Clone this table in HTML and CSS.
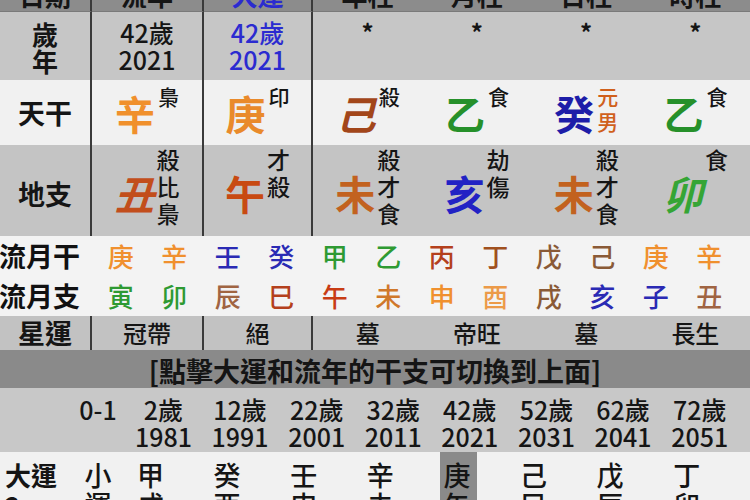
FILE: index.html
```html
<!DOCTYPE html>
<html lang="zh-Hant">
<head>
<meta charset="utf-8">
<title>八字</title>
<link rel="stylesheet" href="styles.css">
</head>
<body>
<div class="page">
  <div class="chart">
    <div class="hdr sep">日期</div>
    <div class="hdr sep">流年</div>
    <div class="hdr sep blue">大運</div>
    <div class="hdr">年柱</div>
    <div class="hdr">月柱</div>
    <div class="hdr">日柱</div>
    <div class="hdr">時柱</div>

    <div class="age lbl sep">歲<br>年</div>
    <div class="age sep">42歲<br>2021</div>
    <div class="age sep blue">42歲<br>2021</div>
    <div class="age star">*</div>
    <div class="age star">*</div>
    <div class="age star">*</div>
    <div class="age star">*</div>

    <div class="gan rlbl sep">天干</div>
    <div class="gan cell sep"><span class="big c-or">辛</span><span class="note">梟</span></div>
    <div class="gan cell sep"><span class="big c-or2">庚</span><span class="note">印</span></div>
    <div class="gan cell"><span class="big c-br it">己</span><span class="note">殺</span></div>
    <div class="gan cell"><span class="big c-gr">乙</span><span class="note">食</span></div>
    <div class="gan cell"><span class="big c-bl">癸</span><span class="note c-red">元<br>男</span></div>
    <div class="gan cell"><span class="big c-gr">乙</span><span class="note">食</span></div>

    <div class="zhi rlbl sep">地支</div>
    <div class="zhi cell sep"><span class="big c-rb it">丑</span><span class="note2">殺<br>比<br>梟</span></div>
    <div class="zhi cell sep"><span class="big c-rd">午</span><span class="note2">才<br>殺</span></div>
    <div class="zhi cell"><span class="big c-wb">未</span><span class="note2">殺<br>才<br>食</span></div>
    <div class="zhi cell"><span class="big c-bl2">亥</span><span class="note2">劫<br>傷</span></div>
    <div class="zhi cell"><span class="big c-wb">未</span><span class="note2">殺<br>才<br>食</span></div>
    <div class="zhi cell"><span class="big c-gr2 it">卯</span><span class="note2">食</span></div>
  </div>

  <div class="months">
    <div class="mlbl">流月干</div>
    <div class="m-or">庚</div><div class="m-or">辛</div><div class="m-bl">壬</div><div class="m-bl">癸</div>
    <div class="m-gr">甲</div><div class="m-gr">乙</div><div class="m-rb">丙</div><div class="m-br">丁</div>
    <div class="m-bn">戊</div><div class="m-bn">己</div><div class="m-or">庚</div><div class="m-or">辛</div>
    <div class="mlbl">流月支</div>
    <div class="m-gr">寅</div><div class="m-gr">卯</div><div class="m-ch">辰</div><div class="m-rb">巳</div>
    <div class="m-rd">午</div><div class="m-wb">未</div><div class="m-or">申</div><div class="m-or2">酉</div>
    <div class="m-bn">戌</div><div class="m-bl">亥</div><div class="m-bl">子</div><div class="m-ch">丑</div>
  </div>

  <div class="stars">
    <div class="slbl sep">星運</div>
    <div class="sep">冠帶</div>
    <div class="sep">絕</div>
    <div>墓</div>
    <div>帝旺</div>
    <div>墓</div>
    <div>長生</div>
  </div>

  <div class="banner">[點擊大運和流年的干支可切換到上面]</div>

  <div class="luck ages">
    <div></div>
    <div class="a0">0-1</div>
    <div class="ac">2歲<br>1981</div>
    <div class="ac">12歲<br>1991</div>
    <div class="ac">22歲<br>2001</div>
    <div class="ac">32歲<br>2011</div>
    <div class="ac">42歲<br>2021</div>
    <div class="ac">52歲<br>2031</div>
    <div class="ac">62歲<br>2041</div>
    <div class="ac">72歲<br>2051</div>
  </div>

  <div class="luck stems">
    <div class="llbl">大運<br>2</div>
    <div class="s0">小<br>運</div>
    <div class="sc">甲<br>戌</div>
    <div class="sc">癸<br>酉</div>
    <div class="sc">壬<br>申</div>
    <div class="sc">辛<br>未</div>
    <div class="sc hl">庚<br>午</div>
    <div class="sc">己<br>巳</div>
    <div class="sc">戊<br>辰</div>
    <div class="sc">丁<br>卯</div>
  </div>
</div>
</body>
</html>
```

FILE: styles.css
```css
* { box-sizing: border-box; margin: 0; padding: 0; }

body {
  width: 750px;
  height: 500px;
  overflow: hidden;
  background: #f1f1f1;
  color: #151515;
  font-family: "Noto Sans CJK TC", "Noto Sans CJK SC", sans-serif;
  font-weight: 500;
}

.page { margin-top: -18px; }

.chart {
  display: grid;
  grid-template-columns: 92px 112px 109px repeat(4, 1fr);
  grid-template-rows: 30px 68px 65px 91px;
}

.sep { border-right: 2px solid #3a3a3a; }
.blue { color: #2b2bd0; }

.hdr {
  background: #8c8c8c;
  font-size: 26px;
  font-weight: 700;
  line-height: 26px;
  text-align: center;
  border-bottom: 1px solid #7a7a7a;
}

.age {
  background: #c6c6c6;
  font-size: 25px;
  line-height: 27px;
  padding-top: 7px;
  text-align: center;
}
.age.lbl { font-weight: 700; font-size: 26px; padding-top: 8px; }
.age.star { font-size: 24px; font-weight: 700; line-height: 28px; padding-top: 6px; }

.gan { background: #f1f1f1; }
.zhi { background: #c4c4c4; }

.rlbl {
  display: flex;
  align-items: center;
  justify-content: center;
  font-size: 27px;
  font-weight: 700;
}
.zhi.rlbl { padding-top: 5px; }

.cell {
  display: flex;
  justify-content: center;
  align-items: flex-start;
}

.big {
  align-self: center;
  font-size: 40px;
  font-weight: 700;
  line-height: 1;
}
.zhi .big { margin-top: 4px; }
.it { font-style: italic; }

.note {
  font-size: 21px;
  line-height: 25px;
  padding-top: 4px;
  margin-left: 3px;
}
.note2 {
  font-size: 23px;
  line-height: 27px;
  padding-top: 1px;
  margin-left: 2px;
}

.c-or { color: #f0902c; }
.c-or2 { color: #e98a2b; }
.c-br { color: #a2461a; }
.c-gr { color: #26902a; }
.c-gr2 { color: #35a535; }
.c-bl { color: #1d1da8; }
.c-bl2 { color: #2222c4; }
.c-red { color: #d0601c; }
.c-rb { color: #c24e1c; }
.c-rd { color: #c84a12; }
.c-wb { color: #c2621f; }

.months {
  display: grid;
  grid-template-columns: 94px repeat(12, 53.5px);
  grid-auto-rows: 40px;
  background: #f3f3f3;
  font-size: 26px;
  line-height: 40px;
  text-align: center;
}
.mlbl {
  text-align: left;
  margin-left: -1px;
  font-size: 27px;
  font-weight: 700;
  color: #111;
}
.m-or { color: #f0902e; }
.m-or2 { color: #ec9a48; }
.m-bl { color: #2a2ab4; }
.m-gr { color: #2e9a32; }
.m-rb { color: #b4401c; }
.m-br { color: #a0501e; }
.m-bn { color: #8a5a36; }
.m-ch { color: #a06442; }
.m-rd { color: #c83c14; }
.m-wb { color: #d0782a; }

.stars {
  display: grid;
  grid-template-columns: 92px 112px 109px repeat(4, 1fr);
  height: 34px;
  background: #c2c2c2;
  font-size: 24px;
  line-height: 34px;
  text-align: center;
}
.slbl { font-size: 27px; font-weight: 700; }

.banner {
  height: 38px;
  background: #8a8a8a;
  font-size: 27px;
  font-weight: 700;
  line-height: 38px;
  padding-top: 2px;
  text-align: center;
  color: #151515;
}

.luck {
  display: grid;
  grid-template-columns: 62px 72px repeat(8, 76.6px);
}

.ages {
  height: 64px;
  background: #c8c8c8;
  font-size: 25px;
  line-height: 27px;
}
.a0 { text-align: center; padding-top: 8px; }
.ac { width: 59px; text-align: center; padding-top: 8px; }

.stems {
  height: 60px;
  background: #f1f1f1;
  font-size: 27px;
  line-height: 30px;
}
.llbl { font-size: 26px; font-weight: 700; padding: 8px 0 0 5px; }
.s0 { text-align: center; padding-top: 8px; }
.sc { width: 37px; padding: 8px 0 0 3px; }
.hl { background: #8a8a8a; }
```
